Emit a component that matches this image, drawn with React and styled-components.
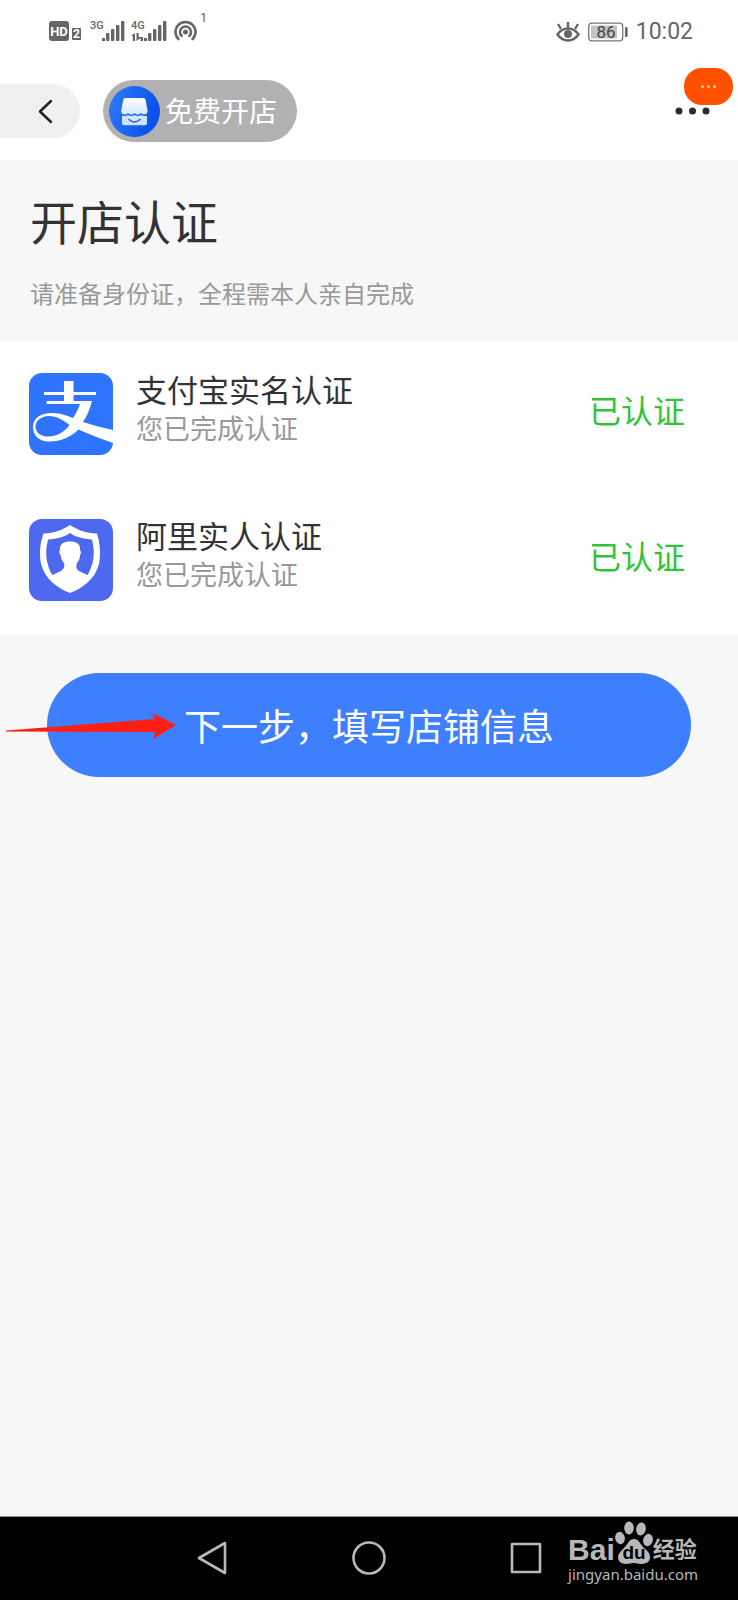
import React from 'react';
import styled, { createGlobalStyle } from 'styled-components';

const GlobalStyle = createGlobalStyle`
  * {
    box-sizing: border-box;
  }
  body {
    margin: 0;
    background: #f7f7f7;
    font-family: 'Liberation Sans', 'Noto Sans CJK SC', sans-serif;
  }
  button {
    border: none;
    padding: 0;
    font-family: inherit;
    cursor: pointer;
  }
`;

const Page = styled.div`
  display: flex;
  flex-direction: column;
  min-height: 100vh;
`;

const StatusBar = styled.div`
  display: flex;
  justify-content: space-between;
  height: 62px;
  padding: 2px 45px 0 49px;
  background: #fff;
  color: #666;
  font-family: Roboto, sans-serif;
`;

const StatusGroup = styled.div`
  display: flex;
  align-items: center;
  gap: 8px;
`;

const Clock = styled.time`
  font-size: 23px;
  line-height: 28px;
`;

const Header = styled.header`
  display: flex;
  align-items: center;
  gap: 23px;
  height: 98px;
  padding-right: 28px;
  background: #fff;
`;

const BackButton = styled.button`
  display: flex;
  align-items: center;
  justify-content: flex-end;
  width: 80px;
  height: 54px;
  padding-right: 27px;
  border-radius: 0 27px 27px 0;
  background: #f0f0f0;
`;

const ShopPill = styled.button`
  display: flex;
  align-items: center;
  gap: 5px;
  height: 62px;
  padding: 0 20px 0 6px;
  border-radius: 31px;
  background: #b1b1b1;
  color: #fff;
  font-size: 28px;
  line-height: 40px;
`;

const PillLabel = styled.span`
  padding-top: 4px;
`;

const MoreButton = styled.button`
  position: relative;
  display: flex;
  margin-left: auto;
  background: none;
`;

const Badge = styled.span`
  position: absolute;
  right: -23px;
  bottom: 10px;
  display: flex;
  align-items: center;
  justify-content: center;
  gap: 3px;
  width: 49px;
  height: 37px;
  border-radius: 18px;
  background: #ff5000;
`;

const BadgeDot = styled.i`
  width: 3px;
  height: 3px;
  border-radius: 50%;
  background: #ffd2bd;
`;

const Main = styled.main`
  flex: 1;
`;

const Intro = styled.section`
  padding: 36px 30px 28px;
`;

const Title = styled.h1`
  margin: 0;
  color: #333;
  font-size: 47px;
  font-weight: 400;
  line-height: 56px;
`;

const Hint = styled.p`
  margin: 24px 0 0;
  color: #999;
  font-size: 24px;
  line-height: 38px;
`;

const List = styled.ul`
  margin: 0;
  padding: 0;
  background: #fff;
  list-style: none;
`;

const Row = styled.li`
  display: flex;
  align-items: center;
  gap: 23px;
  height: 146px;
  padding: 0 53px 2px 29px;
`;

const RowText = styled.div`
  flex: 1;
  padding-bottom: 6px;
`;

const RowTitle = styled.div`
  color: #333;
  font-size: 31px;
  line-height: 38px;
`;

const RowNote = styled.div`
  color: #999;
  font-size: 27px;
  line-height: 38px;
`;

const RowStatus = styled.div`
  padding-bottom: 4px;
  color: #33c33a;
  font-size: 32px;
  line-height: 38px;
`;

const Action = styled.div`
  position: relative;
  padding: 39px 47px;
`;

const NextButton = styled.button`
  width: 100%;
  height: 104px;
  padding-top: 8px;
  border-radius: 52px;
  background: #3d7fff;
  color: #fff;
  font-size: 37px;
  line-height: 48px;
`;

const Pointer = styled.svg`
  position: absolute;
  left: 6px;
  top: 79px;
  pointer-events: none;
`;

const NavBar = styled.nav`
  position: relative;
  display: flex;
  align-items: center;
  justify-content: center;
  gap: 121px;
  height: 84px;
  padding-bottom: 2px;
  border-top: 1px solid #8c8c8c;
  background: #000;
`;

const NavButton = styled.button`
  display: flex;
  background: none;
`;

const Watermark = styled.div`
  position: absolute;
  right: 40px;
  top: 4px;
  color: #b8b8b8;
`;

const Brand = styled.div`
  display: flex;
  align-items: flex-end;
  height: 43px;
  font-size: 30px;
  font-weight: 700;
  line-height: 29px;
`;

const BrandName = styled.span`
  font-size: 22px;
`;

const Site = styled.div`
  font-family: 'Noto Sans', sans-serif;
  font-size: 15px;
  line-height: 20px;
`;

const rows = [
  { title: '支付宝实名认证', note: '您已完成认证', status: '已认证', icon: <AlipayIcon /> },
  { title: '阿里实人认证', note: '您已完成认证', status: '已认证', icon: <ShieldIcon /> },
];

function NetworkIcons() {
  return (
    <svg width="160" height="50" viewBox="0 -6 160 50" fill="#666">
      <rect x="0" y="8" width="20" height="20" rx="3" />
      <text x="10" y="23" textAnchor="middle" fill="#fff" fontSize="13" fontWeight="700">HD</text>
      <rect x="23" y="15" width="9" height="12" rx="1" />
      <text x="27.500" y="25" textAnchor="middle" fill="#fff" fontSize="12" fontWeight="700">2</text>
      <text x="41" y="16" fontSize="11" fontWeight="500">3G</text>
      <SignalBars x={53} />
      <text x="82" y="16" fontSize="11" fontWeight="500">4G</text>
      <path d="M82 23l4-3v8h-2.200v-5zM87.500 20h2.200v4h3l-5.200 4zM91.500 24h2.500v4h-2.500z" />
      <SignalBars x={95} />
      <g fill="none" stroke="#666" strokeWidth="2.600" strokeLinecap="round">
        <path d="M129.400 26a10 10 0 1 1 14.200 0" />
        <path d="M132.600 22.900a5.500 5.500 0 1 1 7.800 0" />
      </g>
      <circle cx="136.500" cy="19" r="2.500" />
      <text x="151" y="9" fontSize="13">1</text>
    </svg>
  );
}

function SignalBars({ x }) {
  return (
    <g>
      <rect x={x} y="25" width="3" height="3" />
      <rect x={x + 4} y="20" width="3.400" height="8" rx="1" />
      <rect x={x + 9} y="16" width="3.400" height="12" rx="1" />
      <rect x={x + 14} y="12" width="3.400" height="16" rx="1" />
      <rect x={x + 19} y="8" width="3.400" height="20" rx="1" />
    </g>
  );
}

function EyeIcon() {
  return (
    <svg width="24" height="22" viewBox="0 0 24 22" fill="none" stroke="#666" strokeWidth="2.400">
      <path d="M1.500 13.500C7 5.500 17 5.500 22.500 13.500C17 21.500 7 21.500 1.500 13.500Z" />
      <path d="M12 7V1M5 8L2 3M19 8l3-5" />
      <circle cx="12" cy="13" r="4" fill="#666" stroke="none" />
    </svg>
  );
}

function BatteryIcon() {
  return (
    <svg width="40" height="20" viewBox="0 0 40 20">
      <rect x="0.700" y="1.200" width="34" height="17.600" rx="3" fill="#fff" stroke="#777" strokeWidth="1.300" />
      <rect x="3" y="3.500" width="26" height="13" fill="#c4c4c4" />
      <rect x="37" y="5" width="2.600" height="10" rx="1" fill="#666" />
      <text x="18" y="16" textAnchor="middle" fontSize="17" fill="#444">86</text>
    </svg>
  );
}

function ShopIcon() {
  return (
    <svg width="51" height="51" viewBox="0 0 51 51">
      <defs>
        <linearGradient id="shopBg" x1="0" y1="0" x2="1" y2="0.300">
          <stop offset="0" stopColor="#2f7cf8" />
          <stop offset="1" stopColor="#0b50ea" />
        </linearGradient>
        <linearGradient id="roof" x1="0" y1="0" x2="0" y2="1">
          <stop offset="0" stopColor="#fff" />
          <stop offset="1" stopColor="#d3e6ff" />
        </linearGradient>
      </defs>
      <circle cx="25.500" cy="25.500" r="25.500" fill="url(#shopBg)" />
      <path d="M16 12H34.500Q36.300 12 36.600 14L38.500 24V26Q38 28.500 35.500 28.500Q33.500 28.500 32 27Q30.500 28.800 28.700 28.800Q27 28.800 25.500 27Q24 28.800 22.200 28.800Q20.500 28.800 19 27Q17.500 28.500 15.500 28.500Q12.800 28.500 12.300 26V24L14.200 14Q14.500 12 16 12Z" fill="url(#roof)" />
      <path d="M13 29.800Q16.500 30.500 19 29Q22 31.200 25.500 29Q29 31.200 32 29Q34.500 30.500 38 29.800V37Q38 39.300 36 39.300H15Q13 39.300 13 37Z" fill="#cfe4ff" />
      <path d="M20 33.500q5.500 5 11 0" fill="none" stroke="#2462dc" strokeWidth="1.600" strokeLinecap="round" />
    </svg>
  );
}

function AlipayIcon() {
  return (
    <svg width="84" height="82" viewBox="0 0 84 82">
      <rect width="84" height="82" rx="13" fill="#2f74ff" />
      <path d="M35 8h9.500v11H67v3H44.500v6H63C61 36 58 43 54 49C64 52 74 55 84 57V70C72 66 60 61 49.500 56.500C42 64 32 68.500 20 68.500C9 68.500 4 61.500 4 54C4 44.500 13 39.500 24 40C32 40.300 38 42.500 44 45C47 40 49.500 36 51 31H17.500v-3H35v-6H15V19h20z" fill="#fff" />
      <path d="M40.500 52C34 47 28 43 20 43C11.500 43.500 6 48 6.500 54.500C7.500 61 13 63.500 19 63.500C28 63.500 35 59 40.500 52Z" fill="#2f74ff" />
    </svg>
  );
}

function ShieldIcon() {
  return (
    <svg width="84" height="82" viewBox="0 0 84 82">
      <rect width="84" height="82" rx="13" fill="#4d69f0" />
      <path d="M41 6C48 11 57 14 68 14.500C71 24 72 35 70 45C66 60 54 69 41 74C28 69 16 60 12 45C10 35 11 24 14.500 14.500C25 14 34 11 41 6Z" fill="#fff" />
      <path d="M41 14C47 18 54 20 63 20.500C65 29 65.500 37 63.500 44C62 49 60.500 53 58.500 56L50 52C47 50 47 47 48 44C50 42 51 39 51 36C52.500 35 52 32 51 31C52 25 47 22.500 41 22.500C35 22.500 30 25 31 31C30 32 30 35 31.500 36C32 39 33 42 35 44C36 47 35 50 32 52L23.500 56C21 53 19.500 48 18.500 44C16.500 37 17 29 19 20.500C28 20 35 18 41 14Z" fill="#4d69f0" />
    </svg>
  );
}

function PawIcon() {
  return (
    <svg width="38" height="43" viewBox="1 0 38 43" fill="#b8b8b8">
      <ellipse cx="6" cy="17" rx="4.800" ry="6.200" transform="rotate(-12 6 17)" />
      <ellipse cx="15" cy="7" rx="4.800" ry="6.500" />
      <ellipse cx="27" cy="8" rx="4.800" ry="6.500" transform="rotate(10 27 8)" />
      <ellipse cx="34" cy="19" rx="4.800" ry="6.200" transform="rotate(14 34 19)" />
      <path d="M20 18c5 0 6 5 10 9 4 3 6 6 6 9 0 5-4 7-9 7-3 0-4-1-7-1s-5 1-8 1c-5 0-8-3-8-7 0-3 3-6 6-9 4-4 5-9 10-9z" />
      <text x="20" y="38" textAnchor="middle" fill="#000" fontSize="19" fontWeight="700">du</text>
    </svg>
  );
}

function App() {
  return (
    <Page>
      <GlobalStyle />
      <StatusBar>
        <StatusGroup>
          <NetworkIcons />
        </StatusGroup>
        <StatusGroup>
          <EyeIcon />
          <BatteryIcon />
          <Clock>10:02</Clock>
        </StatusGroup>
      </StatusBar>

      <Header>
        <BackButton aria-label="返回">
          <svg width="15" height="25" viewBox="0 0 15 25" fill="none" stroke="#222" strokeWidth="2.500" strokeLinecap="round" strokeLinejoin="round">
            <path d="M13 2L2 12.500L13 23" />
          </svg>
        </BackButton>
        <ShopPill>
          <ShopIcon />
          <PillLabel>免费开店</PillLabel>
        </ShopPill>
        <MoreButton aria-label="更多">
          <svg width="35" height="8" viewBox="0 0 35 8" fill="#2b2b2b">
            <circle cx="4" cy="4" r="3.500" />
            <circle cx="17.500" cy="4" r="3.500" />
            <circle cx="31" cy="4" r="3.500" />
          </svg>
          <Badge>
            <BadgeDot />
            <BadgeDot />
            <BadgeDot />
          </Badge>
        </MoreButton>
      </Header>

      <Main>
        <Intro>
          <Title>开店认证</Title>
          <Hint>请准备身份证，全程需本人亲自完成</Hint>
        </Intro>
        <List>
          {rows.map((row) => (
            <Row key={row.title}>
              {row.icon}
              <RowText>
                <RowTitle>{row.title}</RowTitle>
                <RowNote>{row.note}</RowNote>
              </RowText>
              <RowStatus>{row.status}</RowStatus>
            </Row>
          ))}
        </List>
        <Action>
          <NextButton>下一步，填写店铺信息</NextButton>
          <Pointer width="170" height="27" viewBox="0 0 170 27" fill="#ff1e12">
            <path d="M0 17.500L149 6L146 0L170 12L147 26L149 19L0 18.500Z" />
          </Pointer>
        </Action>
      </Main>

      <NavBar>
        <NavButton aria-label="后退">
          <svg width="36" height="36" viewBox="0 0 36 36" fill="none" stroke="#b8b8b8" strokeWidth="2.600" strokeLinejoin="round">
            <path d="M31 3V33L5 18Z" />
          </svg>
        </NavButton>
        <NavButton aria-label="主页">
          <svg width="36" height="36" viewBox="0 0 36 36" fill="none" stroke="#b8b8b8" strokeWidth="2.600">
            <circle cx="18" cy="18" r="15.500" />
          </svg>
        </NavButton>
        <NavButton aria-label="最近任务">
          <svg width="36" height="36" viewBox="0 0 36 36" fill="none" stroke="#b8b8b8" strokeWidth="2.600" strokeLinejoin="round">
            <rect x="4" y="4" width="28" height="28" />
          </svg>
        </NavButton>
        <Watermark>
          <Brand>
            Bai
            <PawIcon />
            <BrandName>经验</BrandName>
          </Brand>
          <Site>jingyan.baidu.com</Site>
        </Watermark>
      </NavBar>
    </Page>
  );
}

export default App;
